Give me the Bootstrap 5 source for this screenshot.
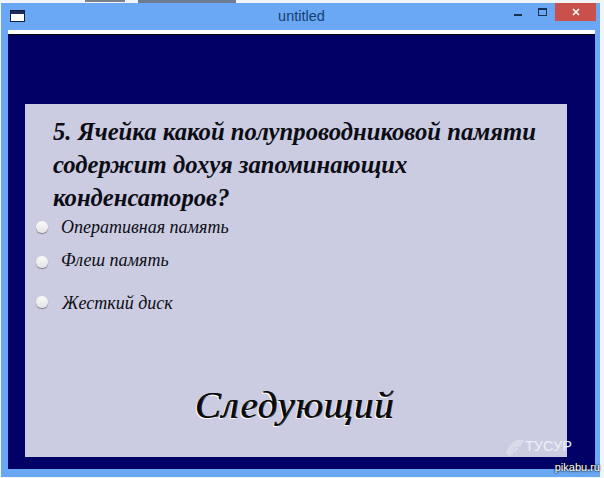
<!DOCTYPE html>
<html lang="ru">
<head>
  <meta charset="UTF-8">
  <title>untitled</title>
  <link href="https://cdn.jsdelivr.net/npm/bootstrap@5.3.3/dist/css/bootstrap.min.css" rel="stylesheet">
  <style>
    html, body { height: 100%; }
    body { background: #f2f5f8; overflow: hidden; font-family: "Liberation Serif", serif; }
    .behind { height: 3px; padding-left: 85px; }
    .behind-a { width: 40px; height: 2px; background: #7b7f88; }
    .behind-b { width: 98px; height: 3px; margin-left: 13px; background: #6d7c93; }
    .wnd { width: 599px; height: 474px; margin-left: 1px; background: #6aa8f5; padding: 0 5px 8px 7px; }
    .wnd-title { height: 27px; color: #17406f; font: 14.5px "Liberation Sans", sans-serif; }
    .wnd-name { padding-top: 5px; padding-left: 0; }
    .wnd-icon { left: 2px; top: 7px; }
    .wnd-ctrls { right: -1px; top: 0; }
    .wnd-close { width: 41px; height: 18px; background: #c9504b; }
    .wnd-btn { width: 25px; height: 18px; }
    .whitebar { height: 5px; background: #fff; border-bottom: 1px solid #000; }
    .slide { background: #000066; padding: 69px 28px 12px 17px; }
    .panel { background: #cbcce1; height: 353px; padding-top: 11px; color: #0c0c14; }
    .question { font-size: 24.7px; line-height: 33px; font-style: italic; font-weight: 700; padding-left: 28px; margin: 0; }
    .answer { font-style: italic; font-size: 18px; line-height: 22px; padding-left: 11px; }
    .answer .form-check-input { width: 12px; height: 12px; margin: 0 13px 0 0; border: 0; background: linear-gradient(#fbfbfb, #e2e2e2); box-shadow: 0 1px 1px #777; float: none; flex: none; }
    .answer-one { margin-top: 2px; }
    .answer-two { margin-top: 11px; }
    .answer-two span { margin-bottom: 4px; }
    .answer-three { margin-top: 15px; }
    .answer-three span { margin-top: 2px; margin-left: 1px; }
    .next-word { font-size: 38.5px; font-style: italic; letter-spacing: 1px; line-height: 40px; color: #0a0a0a; text-shadow: -1px 1px 0 #fff, 1px 0 0 #222; margin-bottom: 32px; padding-right: 3px; }
    .stamp { left: 480px; bottom: -1px; color: #eef0f7; font-size: 14.5px; font-family: "Liberation Sans", sans-serif; gap: 0; }
    .site { right: 4px; bottom: 5px; color: #fff; font: 11px "Liberation Sans", sans-serif; text-shadow: 0 0 2px #000, 0 0 2px #000; }
  </style>
</head>
<body>
<div class="behind d-flex"><div class="behind-a"></div><div class="behind-b"></div></div>
<div class="wnd d-flex flex-column">
  <div class="wnd-title position-relative d-flex justify-content-center">
    <svg class="wnd-icon position-absolute" width="15" height="12" viewBox="0 0 15 12"><rect x=".5" y=".5" width="14" height="11" fill="#fff" stroke="#10203c"/><rect x="1" y="1" width="13" height="3" fill="#1c2c5c"/></svg>
    <span class="wnd-name">untitled</span>
    <div class="wnd-ctrls position-absolute d-flex">
      <div class="wnd-btn d-flex align-items-center justify-content-center"><svg width="8" height="8"><rect width="8" height="2" y="6" fill="#17304f"/></svg></div>
      <div class="wnd-btn d-flex align-items-center justify-content-center"><svg width="10" height="9"><rect x=".5" y=".5" width="8" height="7" fill="none" stroke="#17304f"/><rect width="9" height="2" fill="#17304f"/></svg></div>
      <div class="wnd-close d-flex align-items-center justify-content-center"><svg width="8" height="8"><path d="M1 1l6 6M7 1l-6 6" stroke="#fff" stroke-width="1.6"/></svg></div>
    </div>
  </div>
  <div class="whitebar"></div>
  <div class="slide flex-grow-1">
    <div class="panel position-relative d-flex flex-column">
      <p class="question">5. Ячейка какой полупроводниковой памяти<br>содержит дохуя запоминающих<br>конденсаторов?</p>
      <div class="answer answer-one d-flex align-items-center"><input class="form-check-input" type="radio" name="q" aria-label="1"><span>Оперативная память</span></div>
      <div class="answer answer-two d-flex align-items-center"><input class="form-check-input" type="radio" name="q" aria-label="2"><span>Флеш память</span></div>
      <div class="answer answer-three d-flex align-items-center"><input class="form-check-input" type="radio" name="q" aria-label="3"><span>Жесткий диск</span></div>
      <div class="next-word text-center mt-auto">Следующий</div>
      <div class="stamp position-absolute d-flex align-items-center">
        <svg width="20" height="19" viewBox="0 0 20 19"><path d="M1 15 5 6 12 2h7L15 9l-7 7-4 2z" fill="#fff" fill-opacity=".3"/><path d="M5 6l4 4-1 6M9 10l6-1" stroke="#cbcce1" fill="none"/></svg>
        <span>ТУСУР</span>
      </div>
    </div>
  </div>
</div>
<div class="site position-absolute">pikabu.ru</div>
</body>
</html>
